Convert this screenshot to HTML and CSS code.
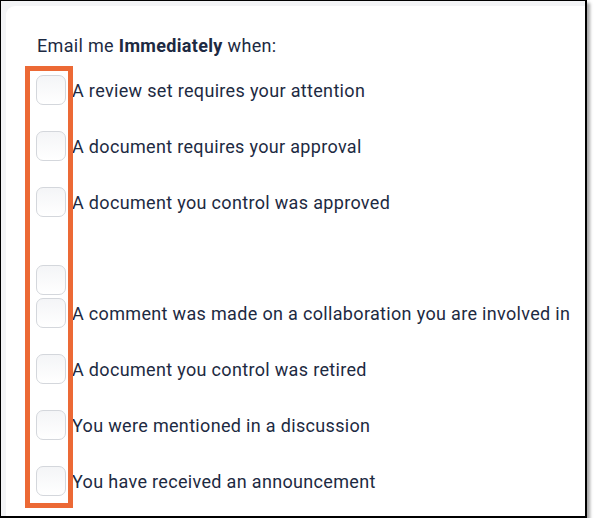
FILE: index.html
```html
<!DOCTYPE html>
<html>
<head>
<meta charset="utf-8">
<link rel="stylesheet" href="styles.css">
</head>
<body>
<div class="frame">
  <div class="card">
    <p class="heading">Email me <strong>Immediately</strong> when:</p>
    <div class="list">
      <label class="row"><span class="box"></span><span class="text">A review set requires your attention</span></label>
      <label class="row"><span class="box"></span><span class="text">A document requires your approval</span></label>
      <label class="row"><span class="box"></span><span class="text">A document you control was approved</span></label>
      <label class="row row-empty"><span class="box"></span></label>
      <label class="row row-after"><span class="box"></span><span class="text">A comment was made on a collaboration you are involved in</span></label>
      <label class="row"><span class="box"></span><span class="text">A document you control was retired</span></label>
      <label class="row"><span class="box"></span><span class="text">You were mentioned in a discussion</span></label>
      <label class="row"><span class="box"></span><span class="text">You have received an announcement</span></label>
    </div>
    <div class="highlight"></div>
  </div>
</div>
</body>
</html>
```
FILE: styles.css
```css
html, body {
  margin: 0;
  padding: 0;
  background: #ffffff;
}
body {
  font-family: Roboto, "Liberation Sans", sans-serif;
  color: #1d2a42;
}
.frame {
  box-sizing: border-box;
  width: 587px;
  height: 518px;
  border-top: 1px solid #000;
  border-left: 1px solid #000;
  border-right: 2px solid #000;
  border-bottom: 2px solid #000;
  background: #f3f4f6;
  padding: 5px 0 0 5px;
  box-shadow: 3px 3px 3px rgba(0,0,0,0.35);
  overflow: hidden;
}
.card {
  position: relative;
  background: #ffffff;
  border-radius: 9px 0 0 0;
  height: 100%;
  padding: 29px 0 0 31px;
  box-sizing: border-box;
}
.heading {
  margin: 0;
  font-size: 18px;
  letter-spacing: 0.33px;
  line-height: 22px;
}
.heading strong {
  font-weight: 700;
}
.list {
  display: flex;
  flex-direction: column;
  margin-top: 18px;
  margin-left: -1px;
}
.row {
  display: flex;
  align-items: center;
  height: 30px;
  margin-bottom: 26px;
}
.row-empty {
  margin-top: 22px;
  margin-bottom: 3px;
}
.box {
  box-sizing: border-box;
  width: 30px;
  height: 30px;
  border: 1px solid #d4d7dc;
  border-radius: 7px;
  background: linear-gradient(#f4f5f7, #ffffff);
  flex: none;
}
.text {
  font-size: 18px;
  letter-spacing: 0.33px;
  margin-left: 6px;
  white-space: nowrap;
}
.highlight {
  position: absolute;
  left: 19px;
  top: 60px;
  width: 48px;
  height: 442px;
  box-sizing: border-box;
  border: 5px solid #ec6935;
}
```
